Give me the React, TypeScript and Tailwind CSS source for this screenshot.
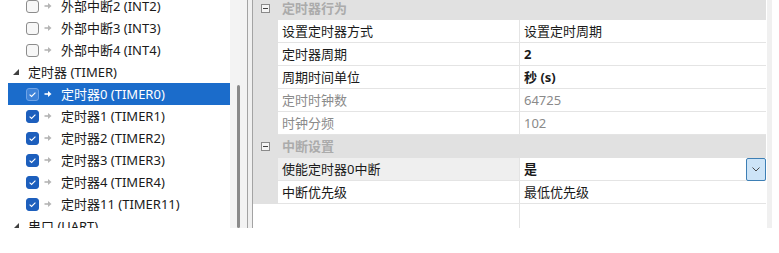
import React from "react";

type TreeItem = {
  label: string;
  level: 0 | 1;
  checked?: boolean;
  selected?: boolean;
};

const treeItems: TreeItem[] = [
  { label: "外部中断2 (INT2)", level: 1, checked: false },
  { label: "外部中断3 (INT3)", level: 1, checked: false },
  { label: "外部中断4 (INT4)", level: 1, checked: false },
  { label: "定时器 (TIMER)", level: 0 },
  { label: "定时器0 (TIMER0)", level: 1, checked: true, selected: true },
  { label: "定时器1 (TIMER1)", level: 1, checked: true },
  { label: "定时器2 (TIMER2)", level: 1, checked: true },
  { label: "定时器3 (TIMER3)", level: 1, checked: true },
  { label: "定时器4 (TIMER4)", level: 1, checked: true },
  { label: "定时器11 (TIMER11)", level: 1, checked: true },
  { label: "串口 (UART)", level: 0 },
];

type GridRow =
  | { kind: "category"; label: string }
  | {
      kind: "prop";
      name: string;
      value: string;
      bold?: boolean;
      readOnly?: boolean;
      selected?: boolean;
    };

const gridRows: GridRow[] = [
  { kind: "category", label: "定时器行为" },
  { kind: "prop", name: "设置定时器方式", value: "设置定时周期" },
  { kind: "prop", name: "定时器周期", value: "2", bold: true },
  { kind: "prop", name: "周期时间单位", value: "秒 (s)", bold: true },
  { kind: "prop", name: "定时时钟数", value: "64725", readOnly: true },
  { kind: "prop", name: "时钟分频", value: "102", readOnly: true },
  { kind: "category", label: "中断设置" },
  { kind: "prop", name: "使能定时器0中断", value: "是", bold: true, selected: true },
  { kind: "prop", name: "中断优先级", value: "最低优先级" },
];

function CheckBox({ checked, onBlue }: { checked?: boolean; onBlue?: boolean }) {
  if (!checked) {
    return (
      <svg width="13" height="13" viewBox="0 0 13 13">
        <rect x="0.5" y="0.5" width="12" height="12" rx="2.5" fill="#f7f7f7" stroke="#8c8c8c" />
      </svg>
    );
  }
  return (
    <svg width="13" height="13" viewBox="0 0 13 13">
      <rect
        x="0.5"
        y="0.5"
        width="12"
        height="12"
        rx="2.5"
        fill={onBlue ? "#3d82d8" : "#1d5fbd"}
        stroke={onBlue ? "#6fa3e6" : "#1d5fbd"}
      />
      <path d="M3.6 6.6 L5.6 8.5 L9.4 4.6" fill="none" stroke="#ffffff" strokeWidth="1.1" />
    </svg>
  );
}

function Arrow({ color }: { color: string }) {
  return (
    <svg width="8" height="8" viewBox="0 0 8 8">
      <path d="M0.5 4 H5" stroke={color} strokeWidth="1.6" />
      <path d="M4 1 L7.5 4 L4 7 Z" fill={color} />
    </svg>
  );
}

function Tree() {
  return (
    <div className="w-[230px] h-full overflow-hidden bg-white">
      <div className="-mt-[5px]">
        {treeItems.map((item) => (
          <div
            key={item.label}
            className={`h-[22px] ml-[8px] flex items-center ${
              item.selected ? "bg-[#1b6ccb] text-white" : "text-[#1a1a1a]"
            }`}
          >
            {item.level === 0 ? (
              <>
                <svg width="6" height="6" viewBox="0 0 6 6" className="ml-[5px]">
                  <path d="M6 0 L6 6 L0 6 Z" fill="#404040" />
                </svg>
                <span className="ml-[9px] whitespace-nowrap">{item.label}</span>
              </>
            ) : (
              <>
                <div className="ml-[18px] flex">
                  <CheckBox checked={item.checked} onBlue={item.selected} />
                </div>
                <div className="ml-[5px] flex">
                  <Arrow color={item.selected ? "#ffffff" : "#b5b5b5"} />
                </div>
                <span className="ml-[9px] whitespace-nowrap">{item.label}</span>
              </>
            )}
          </div>
        ))}
      </div>
    </div>
  );
}

function Grid() {
  return (
    <div className="w-[513px] h-full overflow-hidden bg-white flex flex-col">
      <div className="-mt-[3px]">
        {gridRows.map((row, i) =>
          row.kind === "category" ? (
            <div key={i} className="h-[23px] flex items-center bg-[#e1e1e1]">
              <div className="w-[25px] flex justify-center">
                <svg width="9" height="9" viewBox="0 0 9 9">
                  <rect x="0.5" y="0.5" width="8" height="8" fill="#f4f4f4" stroke="#8a8a8a" />
                  <path d="M2 4.5 H7" stroke="#404040" strokeWidth="1" />
                </svg>
              </div>
              <span className="ml-[4px] font-bold text-[#ababab]">{row.label}</span>
            </div>
          ) : (
            <div key={i} className="h-[23px] flex bg-[#e1e1e1]">
              <div className="w-[25px]" />
              <div
                className={`w-[242px] pl-[4px] flex items-center border-b border-r border-[#e4e4e4] ${
                  row.selected ? "bg-[#efefef]" : "bg-white"
                } ${row.readOnly ? "text-[#8a8a8a]" : "text-[#1a1a1a]"}`}
              >
                {row.name}
              </div>
              <div
                className={`flex-1 pl-[4px] flex items-center justify-between border-b border-[#e4e4e4] bg-white ${
                  row.readOnly ? "text-[#8a8a8a]" : "text-[#1a1a1a]"
                } ${row.bold ? "font-bold" : ""}`}
              >
                <span>{row.value}</span>
                {row.selected && (
                  <div className="w-[20px] h-[23px] -mb-px flex items-center justify-center bg-[#cde4f7] border border-[#3d7fb5] rounded-[2px]">
                    <svg width="8" height="5" viewBox="0 0 8 5">
                      <path d="M0.5 0.5 L4 4 L7.5 0.5" fill="none" stroke="#4a4a4a" strokeWidth="1" />
                    </svg>
                  </div>
                )}
              </div>
            </div>
          )
        )}
      </div>
      <div className="flex-1 flex">
        <div className="w-[267px] border-r border-[#e4e4e4]" />
        <div className="flex-1" />
      </div>
    </div>
  );
}

export default function App() {
  return (
    <div
      className="w-[779px] h-[253px] bg-white text-[13px] leading-none overflow-hidden"
      style={{ fontFamily: '"Noto Sans", "Noto Sans CJK SC", sans-serif' }}
    >
      <div className="h-[228px] flex">
        <Tree />
        <div className="w-[17px] h-full bg-[#f3f3f3] flex flex-col">
          <div className="h-[85px]" />
          <div className="flex-1 w-[3px] ml-[7px] bg-[#8a8a8a] rounded-full" />
        </div>
        <div className="w-px bg-[#a3a3a3]" />
        <div className="w-[4px] bg-[#f0f0f0]" />
        <div className="w-px bg-[#a3a3a3]" />
        <Grid />
        <div className="w-px bg-white" />
        <div className="w-[5px] bg-[#f0f0f0]" />
        <div className="flex-1 bg-white" />
      </div>
    </div>
  );
}
